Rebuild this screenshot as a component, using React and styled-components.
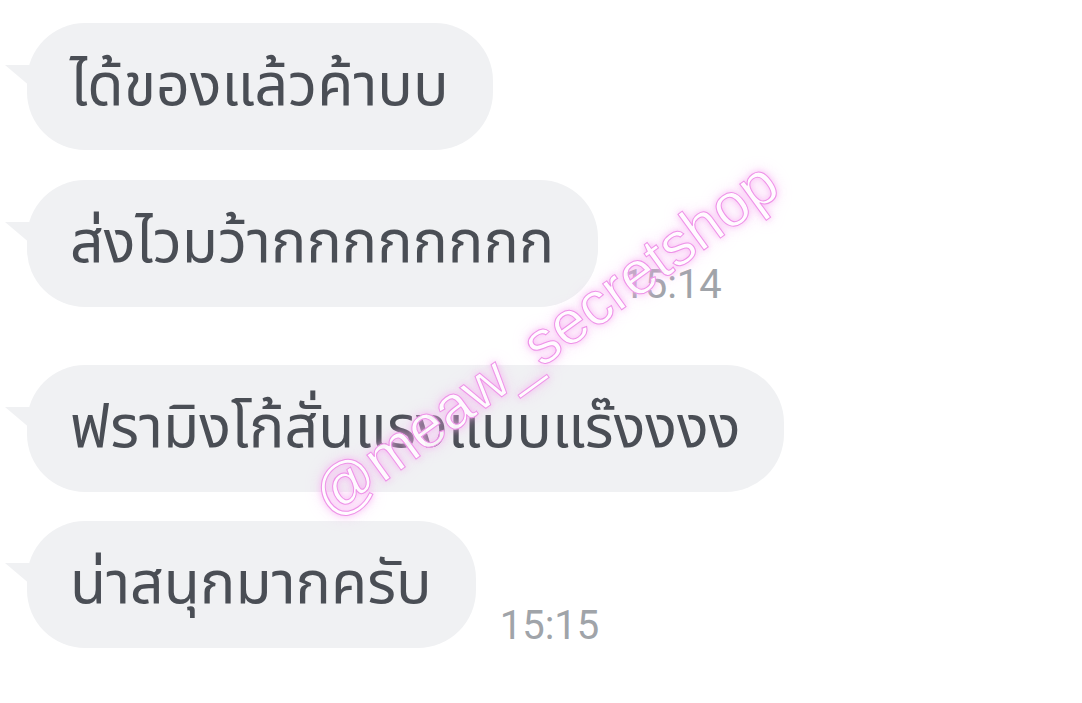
import styled, { createGlobalStyle } from "styled-components";

const GlobalStyle = createGlobalStyle`
  html, body {
    margin: 0;
    padding: 0;
    background: #ffffff;
  }
  body {
    width: 1082px;
    height: 703px;
    overflow: hidden;
  }
`;

const Screen = styled.div`
  position: relative;
  width: 1082px;
  height: 703px;
  background: #ffffff;
  overflow: hidden;
`;

const Chat = styled.div`
  display: flex;
  flex-direction: column;
  padding: 23px 0 0 27px;
`;

const Row = styled.div`
  display: flex;
  align-items: flex-end;
  gap: 24px;
  margin-bottom: ${(p) => p.$gap}px;
`;

const Bubble = styled.div`
  position: relative;
  height: 127px;
  display: flex;
  align-items: center;
  padding: 0 44px 0 43px;
  background: #f0f1f3;
  border-radius: 58px;
  font-family: "Noto Sans Thai", "Noto Sans", "DejaVu Sans", sans-serif;
  font-size: 59px;
  color: #4a4e55;
  white-space: nowrap;

  &::before {
    content: "";
    position: absolute;
    left: -22px;
    top: 42px;
    border-bottom: 22px solid transparent;
    border-right: 26px solid #f0f1f3;
  }
`;

const Time = styled.span`
  font-family: Roboto, "Liberation Sans", sans-serif;
  font-size: 40px;
  color: #a0a4a9;
  line-height: 1;
  margin-bottom: 2px;
`;

const Watermark = styled.div`
  position: absolute;
  left: 320px;
  top: 470px;
  transform: rotate(-36deg);
  transform-origin: left center;
  font-family: "Liberation Sans", Arial, sans-serif;
  font-size: 61px;
  line-height: 66px;
  white-space: nowrap;
  color: rgba(255, 255, 255, 0.9);
  -webkit-text-stroke: 1px #ee92e8;
  text-shadow: 0 0 6px rgba(248, 170, 242, 0.9), 0 0 16px rgba(248, 185, 244, 0.7);
  pointer-events: none;
`;

const messages = [
  { text: "ได้ของแล้วค้าบบ", gap: 30 },
  { text: "ส่งไวมว้ากกกกกกกก", time: "15:14", gap: 58 },
  { text: "ฟรามิงโก้สั่นแรงแบบแร๊งงงง", gap: 29 },
  { text: "น่าสนุกมากครับ", time: "15:15", gap: 0 },
];

export default function App() {
  return (
    <Screen>
      <GlobalStyle />
      <Chat>
        {messages.map((m, i) => (
          <Row key={i} $gap={m.gap}>
            <Bubble>{m.text}</Bubble>
            {m.time && <Time>{m.time}</Time>}
          </Row>
        ))}
      </Chat>
      <Watermark>@meaw_secretshop</Watermark>
    </Screen>
  );
}
